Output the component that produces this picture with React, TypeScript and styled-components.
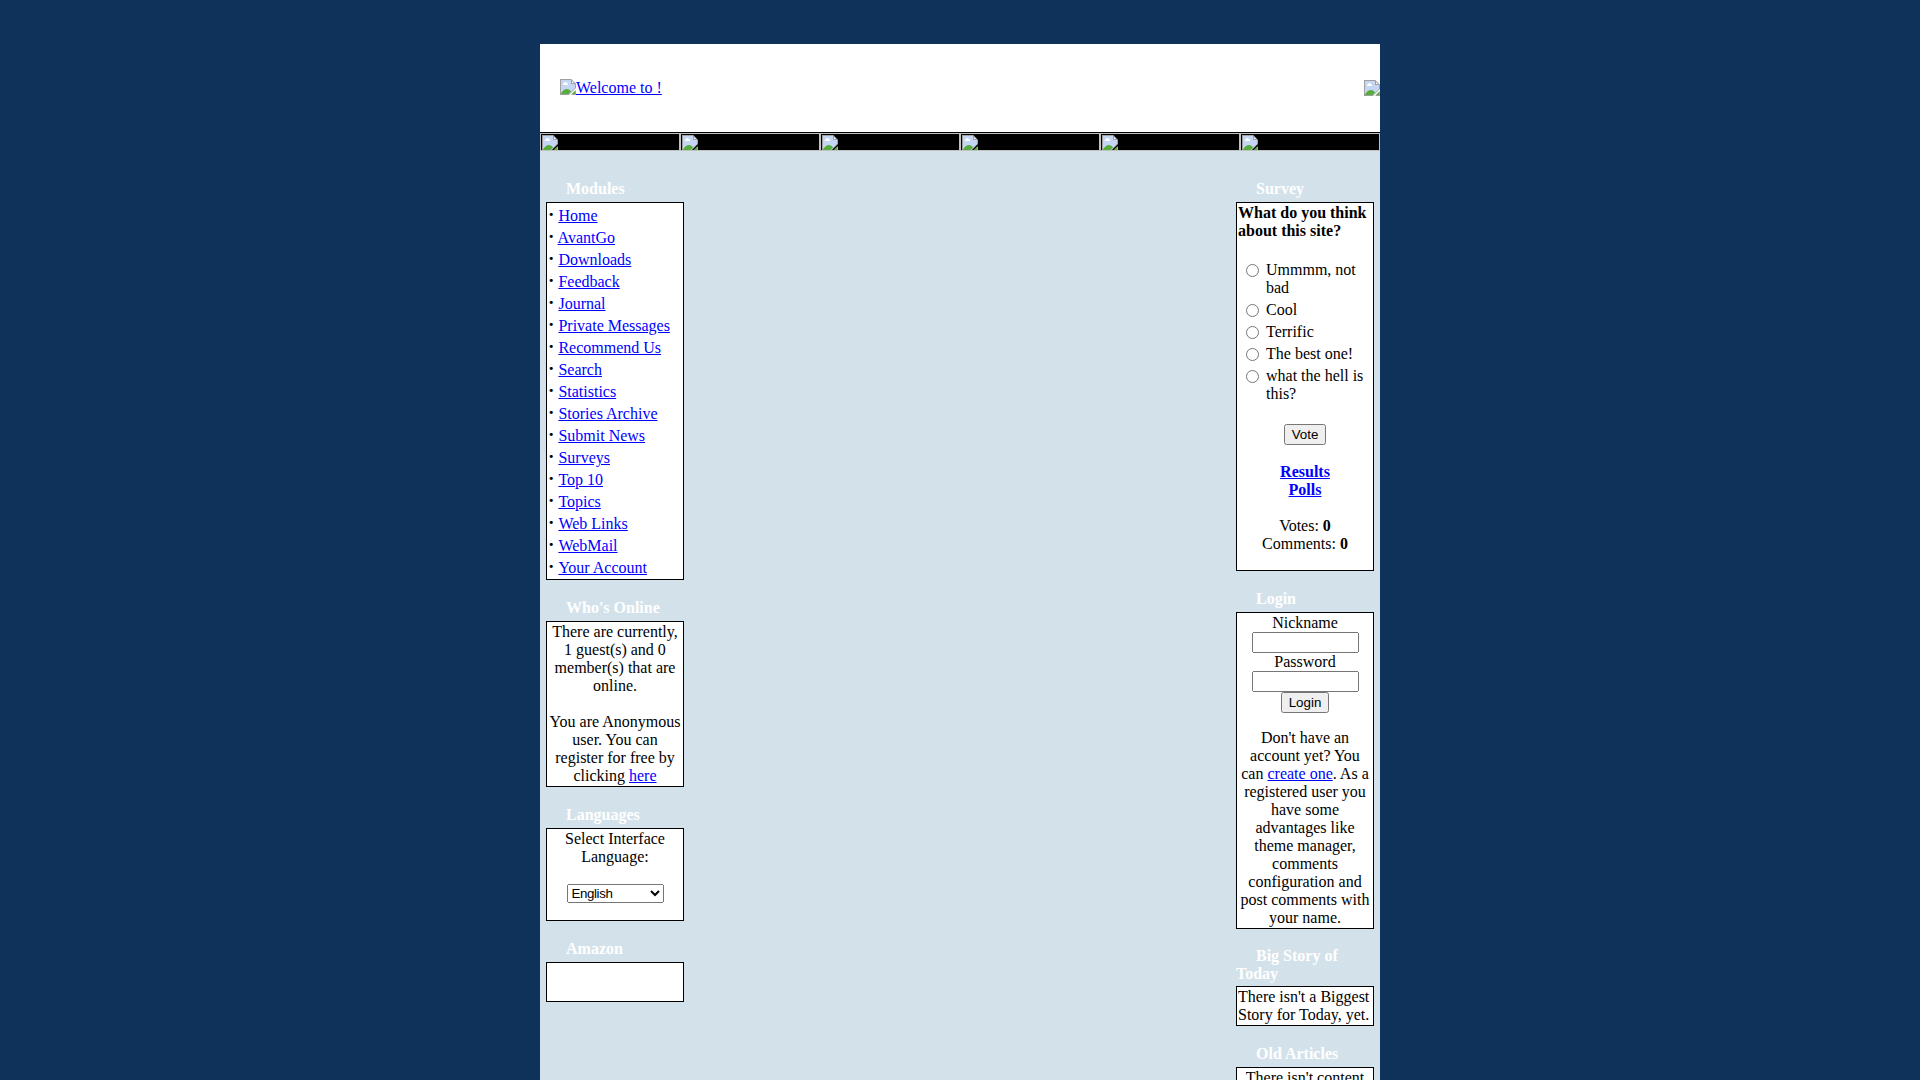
import React from "react";
import styled, { createGlobalStyle } from "styled-components";

const GlobalStyle = createGlobalStyle`
  html, body { margin: 0; padding: 0; background: #0e3259; }
  body { font: 16px/18px "Liberation Serif", "Times New Roman", serif; color: #000; overflow: hidden; }
  a { color: #0000ff; text-decoration: underline; }
`;

const Page = styled.div`
  box-sizing: border-box;
  height: 1080px;
  padding-top: 44px;
  overflow: hidden;
  display: flex;
  justify-content: center;
`;

const Sheet = styled.div`
  width: 840px;
  min-height: 1036px;
  background: #d3e2ea;
`;

const Header = styled.header`
  height: 88px;
  background: #fff;
  border-bottom: 1px solid #000;
  display: flex;
  justify-content: space-between;
  align-items: flex-start;
`;

const Logo = styled.a`
  display: flex;
  margin: 35px 0 0 20px;
  align-items: flex-start;
`;

const Banner = styled.div`
  display: flex;
  margin-top: 36px;
`;

const NavBar = styled.nav`
  display: grid;
  grid-template-columns: repeat(6, 140px);
  height: 18px;
`;

const NavCell = styled.a`
  box-sizing: border-box;
  height: 18px;
  border: 1px solid #c0c0c0;
  background: #000;
  padding: 1px;
  overflow: hidden;
`;

const Columns = styled.main`
  display: flex;
  justify-content: space-between;
  padding: 10px 6px 0;
`;

const Column = styled.div`
  width: 138px;
`;

const BlockHead = styled.div`
  padding: 18px 0 3px;
`;

const BlockTitle = styled.h2`
  margin: 0;
  min-height: 20px;
  display: flex;
  align-items: center;
  font-size: 16px;
  line-height: 18px;
  color: #fff;
  text-indent: 20px;
`;

const BlockBody = styled.div<{ $align?: string; $height?: number }>`
  box-sizing: border-box;
  border: 1px solid #000;
  background: #fff;
  padding: 1px;
  text-align: ${(p) => p.$align ?? "center"};
  height: ${(p) => (p.$height ? `${p.$height}px` : "auto")};
`;

const Para = styled.p<{ $gap?: number }>`
  margin: ${(p) => p.$gap ?? 0}px 0 0;
`;

const ModuleRow = styled.div`
  height: 22px;
  line-height: 22px;
  white-space: nowrap;
  display: flow-root;
`;

const ModuleLink = styled.a<{ $kern: boolean }>`
  margin-left: ${(p) => (p.$kern ? "-0.9px" : "0")};
`;

const Dot = styled.strong`
  font-size: 19.2px;
`;

const Question = styled.div`
  font-weight: bold;
  text-align: left;
`;

const Choices = styled.div`
  display: flex;
  flex-direction: column;
  gap: 4px;
  margin: 21px 0 21px;
  padding: 0 3px 0 8px;
`;

const Choice = styled.label`
  display: flex;
  align-items: flex-start;
  text-align: left;
`;

const Radio = styled.input`
  width: 13px;
  height: 13px;
  flex: none;
  margin: 3px 7px 0 0;
`;

const Button = styled.button<{ $width: number }>`
  display: block;
  box-sizing: border-box;
  width: ${(p) => p.$width}px;
  height: 21px;
  margin: 0 auto;
  padding: 1px 0;
  font: 13.333px "Liberation Sans", Arial, sans-serif;
`;

const Field = styled.input`
  display: block;
  box-sizing: border-box;
  width: 107px;
  height: 21px;
  margin: 0 auto;
`;

const Select = styled.select`
  display: block;
  width: 97px;
  height: 19px;
  margin: 18px auto 0;
  font: 13.333px "Liberation Sans", Arial, sans-serif;
  letter-spacing: -0.4px;
`;

function MissingImage() {
  return (
    <svg width="16" height="16" viewBox="0 0 16 16" display="block">
      <path d="M0 0H11L16 5V9L9 16H0Z" fill="#a0a0a0" />
      <path d="M1 1H11L15 5V9L9 15H1Z" fill="#c5d6f5" />
      <path d="M3 6V5L5 3H6L8 5V6Z" fill="#fff" />
      <path d="M1 15V14.5C4 9 9 9 11 12.5L8.5 15Z" fill="#56ad3b" />
      <path d="M11 0L16 5H11Z" fill="#a0a0a0" />
      <path d="M12 2L14 4H12Z" fill="#fff" />
      <path d="M16 11V16H11Z" fill="#a0a0a0" />
      <path d="M15 12V15H12Z" fill="#56ad3b" />
    </svg>
  );
}

interface BlockProps {
  title: string;
  children?: React.ReactNode;
  align?: string;
  height?: number;
}

function Block({ title, children, align, height }: BlockProps) {
  return (
    <section>
      <BlockHead>
        <BlockTitle>{title}</BlockTitle>
      </BlockHead>
      <BlockBody $align={align} $height={height}>{children}</BlockBody>
    </section>
  );
}

const modules = [
  "Home", "AvantGo", "Downloads", "Feedback", "Journal", "Private Messages",
  "Recommend Us", "Search", "Statistics", "Stories Archive", "Submit News",
  "Surveys", "Top 10", "Topics", "Web Links", "WebMail", "Your Account",
];

const options = ["Ummmm, not bad", "Cool", "Terrific", "The best one!", "what the hell is this?"];

export default function App() {
  return (
    <Page>
      <GlobalStyle />
      <Sheet>
        <Header>
          <Logo href="#"><MissingImage />Welcome to !</Logo>
          <Banner><MissingImage /></Banner>
        </Header>
        <NavBar>
          {[0, 1, 2, 3, 4, 5].map((n) => (
            <NavCell href="#" key={n}><MissingImage /></NavCell>
          ))}
        </NavBar>
        <Columns>
          <Column>
            <Block title="Modules" align="left" height={378}>
              {modules.map((m) => (
                <ModuleRow key={m}>
                  <Dot>·</Dot>&nbsp;<ModuleLink href="#" $kern={m.startsWith("A")}>{m}</ModuleLink>
                </ModuleRow>
              ))}
            </Block>
            <Block title="Who's Online">
              <Para>There are currently, 1 guest(s) and 0 member(s) that are online.</Para>
              <Para $gap={18}>You are Anonymous user. You can register for free by clicking <a href="#">here</a></Para>
            </Block>
            <Block title="Languages" height={93}>
              <Para>Select Interface Language:</Para>
              <Select defaultValue="English"><option>English</option></Select>
            </Block>
            <Block title="Amazon" height={40} />
          </Column>
          <Column>
            <Block title="Survey" height={369}>
              <Question>What do you think about this site?</Question>
              <Choices>
                {options.map((o) => (
                  <Choice key={o}><Radio type="radio" name="poll" /><span>{o}</span></Choice>
                ))}
              </Choices>
              <Button $width={42}>Vote</Button>
              <Para $gap={18}><b><a href="#">Results</a><br /><a href="#">Polls</a></b></Para>
              <Para $gap={18}>Votes: <b>0</b><br />Comments: <b>0</b></Para>
            </Block>
            <Block title="Login">
              <Para>Nickname</Para>
              <Field type="text" />
              <Para>Password</Para>
              <Field type="password" />
              <Button $width={48}>Login</Button>
              <Para $gap={16}>
                Don't have an account yet? You can <a href="#">create one</a>. As a registered user you have some
                advantages like theme manager, comments configuration and post comments with your name.
              </Para>
            </Block>
            <Block title="Big Story of Today" align="left">
              <Para>There isn't a Biggest Story for Today, yet.</Para>
            </Block>
            <Block title="Old Articles">
              <Para>There isn't content right now for this block.</Para>
            </Block>
          </Column>
        </Columns>
      </Sheet>
    </Page>
  );
}
